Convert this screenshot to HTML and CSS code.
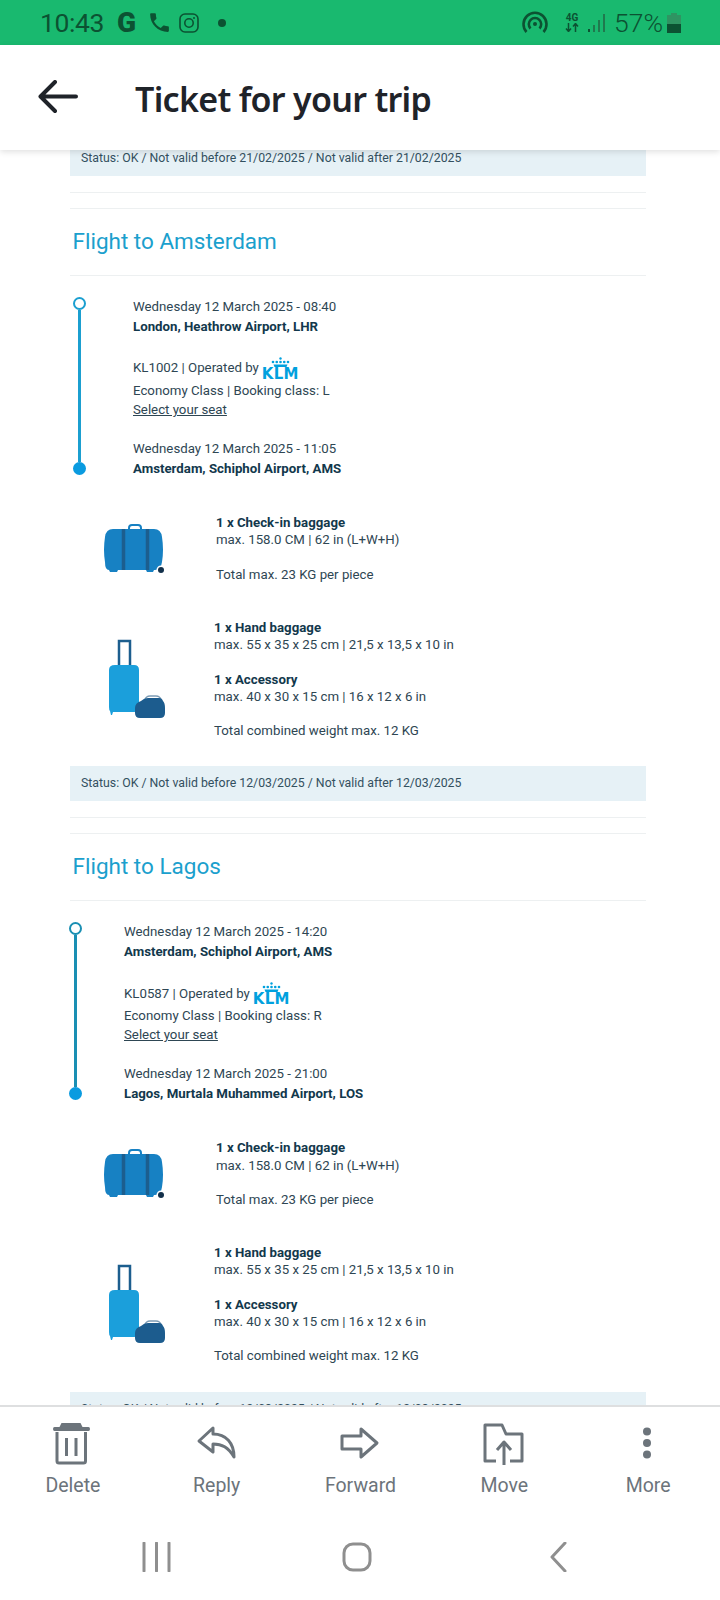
FILE: index.html
```html
<!DOCTYPE html>
<html>

<head>
    <title>Ticket for your trip</title>
    <link rel="stylesheet" href="styles.css">
</head>

<body>
    <svg class="sprites" width="0" height="0">
        <symbol id="crown" viewBox="0 0 37 11">
            <circle cx="18.500" cy="1.500" r="1.200"/><circle cx="11" cy="5" r="1.300"/><circle cx="14.750" cy="5" r="1.300"/><circle cx="18.500" cy="5" r="1.300"/><circle cx="22.250" cy="5" r="1.300"/><circle cx="26" cy="5" r="1.300"/>
            <path d="M11.500 7.500h14l-1 2.500h-12z"/>
        </symbol>
        <symbol id="checkin" viewBox="0 0 60 50">
            <path d="M25 8V4q0-3 3-3h6q3 0 3 3v4" fill="none" stroke="#1781c3" stroke-width="2"/>
            <path d="M9 5h41q7 0 8 8 2 13 0 25-1 8-7 8h-1l-1 2h-6l-1-2H14l-1 2H6l-1-2q-4 0-4-8-2-12 0-25 1-8 8-8z" fill="#1781c3"/>
            <path d="M19.500 5v41M43.500 5v41" stroke="#1c5e8e" stroke-width="3.500"/>
            <circle cx="57" cy="46" r="4.500" fill="#fff"/>
            <circle cx="57" cy="46" r="3" fill="#12304a"/>
        </symbol>
        <symbol id="hand" viewBox="0 0 58 80">
            <path d="M11 26V2h11v24" fill="none" stroke="#1c5e8e" stroke-width="2.500"/>
            <path d="M7 26h19q5 0 5 5v37q0 5-5 5H5l-1 3H3l-1-4q-1-1-1-4V31q0-5 6-5z" fill="#1b9fdb"/>
            <path d="M37 61q1-4 5-4h6q4 0 5 4" fill="none" stroke="#7d9cb5" stroke-width="1.500"/>
            <path d="M33 62q3-3 7-3h11q3 0 4 3 2 2 2 7v5q0 5-5 5H32q-5 0-5-5v-5q0-5 6-7z" fill="#1c5c8e"/>
        </symbol>
    </svg>

    <div class="app">
        <div class="status-bar">
            <span class="clock">10:43</span>
            <span class="g-mark">G</span>
            <svg class="phone" viewBox="0 0 24 24"><path d="M6.620 10.790c1.440 2.830 3.760 5.140 6.590 6.590l2.200-2.200c.270-.270.670-.360 1.020-.240 1.120.370 2.330.570 3.570.570.550 0 1 .450 1 1V20c0 .550-.450 1-1 1-9.390 0-17-7.610-17-17 0-.550.450-1 1-1h3.500c.550 0 1 .450 1 1 0 1.250.200 2.450.570 3.570.110.350.030.740-.250 1.020l-2.200 2.200z"/></svg>
            <svg class="insta" viewBox="0 0 20 20"><rect x="1" y="1" width="18" height="18" rx="5"/><circle cx="10" cy="10" r="4.200"/><circle class="solid" cx="15" cy="5" r="1"/></svg>
            <span class="dot"></span>
            <div class="status-right">
                <svg class="hotspot" viewBox="0 0 26 22"><path d="M4.500 21A11.500 11.500 0 1 1 21.500 21M8.500 17.500A6.200 6.200 0 1 1 17.500 17.500"/><circle class="solid" cx="13" cy="13" r="2"/></svg>
                <div class="net">
                    <span>4G</span>
                    <svg viewBox="0 0 14 9"><path d="M3.500 0v8M1 5.500l2.500 3 2.500-3M10.500 9V1M8 3.500l2.500-3 2.500 3"/></svg>
                </div>
                <svg class="signal" viewBox="0 0 18 18"><rect x="0" y="15" width="2" height="3"/><rect class="faint" x="5" y="11" width="2" height="7"/><rect class="faint" x="10" y="6" width="2" height="12"/><rect class="faint" x="15" y="0" width="2" height="18"/></svg>
                <span class="percent">57%</span>
                <div class="battery"></div>
            </div>
        </div>

        <div class="top-bar">
            <svg class="back" viewBox="0 0 40 34"><path d="M38 16.500H3M17 2L2.500 16.500 17 31"/></svg>
            <h1>Ticket for your trip</h1>
        </div>

        <div class="content">
            <div class="ticket-status">Status: OK / Not valid before 21/02/2025 / Not valid after 21/02/2025</div>

            <section class="trip">
                <hr>
                <hr>
                <h2>Flight to Amsterdam</h2>
                <div class="timeline">
                    <div class="rail"><span class="stop-open"></span><span class="rail-line"></span><span class="stop-full"></span></div>
                    <div class="legs">
                        <p>Wednesday 12 March 2025 - 08:40</p>
                        <p><b>London, Heathrow Airport, LHR</b></p>
                        <p class="operated">KL1002 | Operated by
                            <span class="klm"><svg><use href="#crown"/></svg><span>KLM</span></span>
                        </p>
                        <p>Economy Class | Booking class: L</p>
                        <p><a href="#">Select your seat</a></p>
                        <p class="spaced">Wednesday 12 March 2025 - 11:05</p>
                        <p><b>Amsterdam, Schiphol Airport, AMS</b></p>
                    </div>
                </div>
                <div class="bag bag-checkin">
                    <svg class="bag-icon"><use href="#checkin"/></svg>
                    <div class="bag-text">
                        <p><b>1 x Check-in baggage</b></p>
                        <p>max. 158.0 CM | 62 in (L+W+H)</p>
                        <p class="spaced">Total max. 23 KG per piece</p>
                    </div>
                </div>
                <div class="bag bag-hand">
                    <svg class="bag-icon"><use href="#hand"/></svg>
                    <div class="bag-text">
                        <p><b>1 x Hand baggage</b></p>
                        <p>max. 55 x 35 x 25 cm | 21,5 x 13,5 x 10 in</p>
                        <p class="spaced"><b>1 x Accessory</b></p>
                        <p>max. 40 x 30 x 15 cm | 16 x 12 x 6 in</p>
                        <p class="spaced">Total combined weight max. 12 KG</p>
                    </div>
                </div>
                <div class="ticket-status">Status: OK / Not valid before 12/03/2025 / Not valid after 12/03/2025</div>
            </section>

            <section class="trip trip-second">
                <hr>
                <hr>
                <h2>Flight to Lagos</h2>
                <div class="timeline">
                    <div class="rail"><span class="stop-open"></span><span class="rail-line"></span><span class="stop-full"></span></div>
                    <div class="legs">
                        <p>Wednesday 12 March 2025 - 14:20</p>
                        <p><b>Amsterdam, Schiphol Airport, AMS</b></p>
                        <p class="operated">KL0587 | Operated by
                            <span class="klm"><svg><use href="#crown"/></svg><span>KLM</span></span>
                        </p>
                        <p>Economy Class | Booking class: R</p>
                        <p><a href="#">Select your seat</a></p>
                        <p class="spaced">Wednesday 12 March 2025 - 21:00</p>
                        <p><b>Lagos, Murtala Muhammed Airport, LOS</b></p>
                    </div>
                </div>
                <div class="bag bag-checkin">
                    <svg class="bag-icon"><use href="#checkin"/></svg>
                    <div class="bag-text">
                        <p><b>1 x Check-in baggage</b></p>
                        <p>max. 158.0 CM | 62 in (L+W+H)</p>
                        <p class="spaced">Total max. 23 KG per piece</p>
                    </div>
                </div>
                <div class="bag bag-hand">
                    <svg class="bag-icon"><use href="#hand"/></svg>
                    <div class="bag-text">
                        <p><b>1 x Hand baggage</b></p>
                        <p>max. 55 x 35 x 25 cm | 21,5 x 13,5 x 10 in</p>
                        <p class="spaced"><b>1 x Accessory</b></p>
                        <p>max. 40 x 30 x 15 cm | 16 x 12 x 6 in</p>
                        <p class="spaced">Total combined weight max. 12 KG</p>
                    </div>
                </div>
                <div class="ticket-status">Status: OK / Not valid before 12/03/2025 / Not valid after 12/03/2025</div>
            </section>
        </div>

        <div class="bottom-bar">
            <div class="actions">
                <div class="action">
                    <svg viewBox="1.500 0 44 42"><path class="fill" d="M12 0h19l2 4h6q1.500 0 1.500 2t-1.500 2H5q-1.500 0-1.500-2T5 4h5z"/><path d="M7.500 9v29q0 2 2 2h24.500q2 0 2-2V9M17 15v18M26.500 15v18"/></svg>
                    <span>Delete</span>
                </div>
                <div class="action">
                    <svg viewBox="0 0 44 42"><path d="M18 5L4 18l14 11v-8c9 0 15 3 21 13 0-14-8-23-21-23z"/></svg>
                    <span>Reply</span>
                </div>
                <div class="action">
                    <svg viewBox="0 0 44 42"><path d="M4 13h19V6l16 14-16 14v-8H4z"/></svg>
                    <span>Forward</span>
                </div>
                <div class="action">
                    <svg viewBox="0 0 44 42"><path d="M14 38H3V2h17l4 9h16v27H28M22 42V20M15 27l7-8 7 8"/></svg>
                    <span>Move</span>
                </div>
                <div class="action">
                    <svg viewBox="0 0 44 42"><circle class="fill" cx="21" cy="8.500" r="4"/><circle class="fill" cx="21" cy="20" r="4"/><circle class="fill" cx="21" cy="31.500" r="4"/></svg>
                    <span>More</span>
                </div>
            </div>
            <div class="nav-bar">
                <svg viewBox="0 0 32 30"><path d="M4 1v28M16.500 1v28M29 1v28"/></svg>
                <svg viewBox="0 0 32 30"><rect x="3" y="2" width="26" height="26" rx="9"/></svg>
                <svg viewBox="0 0 32 30"><path d="M23 1L10 15l13 14"/></svg>
            </div>
        </div>
    </div>
</body>

</html>
```

FILE: styles.css
```css
* {
    box-sizing: border-box;
}

body {
    margin: 0;
    background-color: #fff;
    font-family: Roboto, sans-serif;
}

.sprites {
    position: absolute;
}

.app {
    width: 720px;
    height: 1600px;
    display: flex;
    flex-direction: column;
    overflow: hidden;
}

/* status bar */
.status-bar {
    height: 45px;
    flex: none;
    display: flex;
    align-items: center;
    padding-left: 40px;
    background-color: #19b96f;
    color: #0c5232;
}

.clock {
    width: 77px;
    font-size: 26.500px;
    font-weight: 400;
    letter-spacing: -0.4px;
}

.g-mark {
    width: 30px;
    font-size: 28px;
    font-weight: 900;
}

.phone {
    width: 25px;
    height: 25px;
    margin-right: 7px;
    fill: #0c5232;
}

.insta {
    width: 20px;
    height: 20px;
    fill: none;
    stroke: #0c5232;
    stroke-width: 1.600;
}

.solid {
    fill: #0c5232;
    stroke: none;
}

.dot {
    width: 8px;
    height: 8px;
    margin-left: 19px;
    border-radius: 50%;
    background-color: #0c5232;
}

.status-right {
    margin-left: auto;
    padding-right: 39px;
    display: flex;
    align-items: center;
}

.hotspot {
    width: 26px;
    height: 22px;
    margin: -2px 17px 0 0;
    fill: none;
    stroke: #0c5232;
    stroke-width: 2.600;
}

.net {
    width: 14px;
    margin-right: 9px;
    display: flex;
    flex-direction: column;
    align-items: center;
}

.net span {
    font-size: 10px;
    line-height: 10px;
    font-weight: 700;
}

.net svg {
    width: 14px;
    height: 9px;
    fill: none;
    stroke: #0c5232;
    stroke-width: 1.500;
}

.signal {
    width: 18px;
    height: 18px;
    margin-right: 8px;
    fill: #0c5232;
}

.signal .faint {
    fill: #1f7a4e;
}

.percent {
    width: 53px;
    font-size: 26.500px;
    font-weight: 300;
}

.battery {
    width: 14px;
    height: 20px;
    background: linear-gradient(90deg, transparent 4px, #2f9462 4px, #2f9462 10px, transparent 10px) top / 14px 2px no-repeat,
        linear-gradient(#2f9462 9px, #0c5232 9px) bottom / 14px 18px no-repeat;
}

/* header */
.top-bar {
    height: 105px;
    flex: none;
    display: flex;
    align-items: center;
    position: relative;
    z-index: 1;
    background-color: #fff;
    box-shadow: 0 2px 6px rgba(0, 0, 0, 0.12);
}

.back {
    width: 40px;
    height: 34px;
    margin-left: 38px;
    margin-top: -1px;
    fill: none;
    stroke: #1f2329;
    stroke-width: 4;
    stroke-linecap: round;
    stroke-linejoin: round;
}

h1 {
    margin: 2px 0 0 57px;
    font-family: "Noto Sans", sans-serif;
    font-size: 34px;
    font-weight: 600;
    color: #1f2329;
    letter-spacing: -0.7px;
}

/* mail body */
.content {
    flex: 1;
    min-height: 0;
    margin-top: -9px;
    padding: 0 74px 0 70px;
    overflow: hidden;
    font-size: 13.250px;
    line-height: 19.500px;
    color: #2e4653;
}

.content p {
    margin: 0;
}

.content b {
    color: #12384c;
}

.content a {
    color: inherit;
}

.ticket-status {
    height: 35px;
    padding: 5px 11px 0;
    background-color: #e6f1f6;
    font-size: 12.300px;
    line-height: 25px;
    color: #33505f;
}

hr {
    height: 1px;
    margin: 16px 0 0;
    border: 0;
    background-color: #edf0f1;
}

hr + hr {
    margin-top: 15px;
}

h2 {
    height: 67px;
    margin: 0;
    padding-left: 2.500px;
    border-bottom: 1px solid #edf0f1;
    font-size: 22.500px;
    line-height: 65px;
    font-weight: 400;
    color: #1ba0cd;
}

.timeline {
    margin: 21px 0 0 3px;
    display: flex;
    gap: 47px;
}

.trip-second .timeline {
    margin-left: -1px;
    gap: 42px;
}

.rail {
    width: 13px;
    padding-bottom: 3px;
    display: flex;
    flex-direction: column;
    align-items: center;
}

.stop-open {
    width: 13px;
    height: 13px;
    flex: none;
    border: 2.500px solid #1b9fd0;
    border-radius: 50%;
}

.rail-line {
    width: 2.500px;
    flex: 1;
    background-color: #1b9fd0;
}

.trip-second .rail-line {
    background-color: #1a8fb3;
}

.trip-second .stop-open {
    border-color: #1a8fb3;
}

.stop-full {
    width: 13px;
    height: 13px;
    flex: none;
    border-radius: 50%;
    background-color: #0a9be0;
}

.content .operated {
    height: 25px;
    margin-top: 19.500px;
    display: flex;
    align-items: center;
    gap: 3px;
}

.klm {
    width: 37px;
    flex: none;
    display: flex;
    flex-direction: column;
    fill: #00a1de;
    color: #00a1de;
}

.klm svg {
    width: 37px;
    height: 11px;
}

.klm span {
    font-family: "DejaVu Sans", sans-serif;
    font-weight: 700;
    font-size: 15px;
    letter-spacing: 0.2px;
    line-height: 12px;
}

.content .spaced {
    margin-top: 19.500px;
}

.bag {
    display: flex;
    align-items: center;
    line-height: 17.300px;
}

.content .bag .spaced {
    margin-top: 17.300px;
}

.bag-checkin {
    margin: 36px 0 0 34px;
    gap: 52px;
}

.bag-checkin .bag-icon {
    width: 60px;
    height: 50px;
}

.bag-hand {
    margin: 35.800px 0 26.900px 38px;
    gap: 48px;
    line-height: 17.200px;
}

.content .bag-hand .spaced {
    margin-top: 17.200px;
}

.bag-hand .bag-icon {
    width: 58px;
    height: 80px;
}

/* bottom actions */
.bottom-bar {
    height: 195px;
    flex: none;
    position: relative;
    background-color: #fff;
    border-top: 2px solid #dedfe0;
}

.actions {
    display: flex;
    padding: 16px 0 0 1px;
}

.action {
    width: 144px;
    display: flex;
    flex-direction: column;
    align-items: center;
    gap: 9px;
    color: #6c747b;
    font-size: 19.500px;
    line-height: 24px;
}

.action svg {
    width: 44px;
    height: 42px;
    fill: none;
    stroke: #6c747b;
    stroke-width: 3;
    stroke-linejoin: round;
}

.action svg .fill {
    fill: #6c747b;
    stroke: none;
}

.nav-bar {
    margin-top: 44px;
    padding-right: 7px;
    display: flex;
    justify-content: center;
}

.nav-bar svg {
    width: 32px;
    height: 30px;
    margin: 0 84.500px;
    fill: none;
    stroke: #8f8f8f;
    stroke-width: 3;
    stroke-linecap: round;
    stroke-linejoin: round;
}
```
